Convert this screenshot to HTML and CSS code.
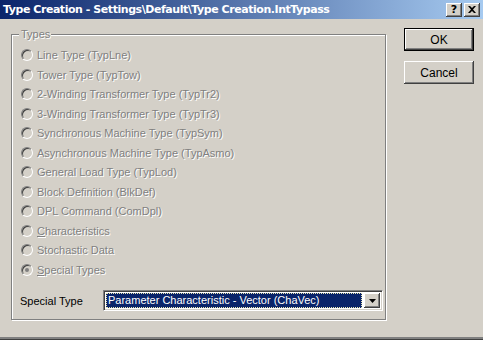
FILE: index.html
```html
<!DOCTYPE html>
<html lang="en">
<head>
    <meta charset="UTF-8">
    <title>Type Creation</title>
    <link rel="stylesheet" href="styles.css">
</head>
<body>
<div class="window">
    <div class="titlebar">
        <span class="title">Type Creation - Settings\Default\Type Creation.IntTypass</span>
        <button class="cap-btn">?</button>
        <button class="cap-btn close">
            <svg width="8" height="7" viewBox="0 0 8 7"><path d="M0 0h2l2 2 2-2h2L5 3.5 8 7H6L4 5 2 7H0l3-3.5z" fill="#000"/></svg>
        </button>
    </div>

    <div class="client">
        <div class="group">
            <span class="legend disabled">Types</span>
            <ul class="radios">
                <li><span class="radio"></span><span class="disabled">Line Type (TypLne)</span></li>
                <li><span class="radio"></span><span class="disabled">Tower Type (TypTow)</span></li>
                <li><span class="radio"></span><span class="disabled">2-Winding Transformer Type (TypTr2)</span></li>
                <li><span class="radio"></span><span class="disabled">3-Winding Transformer Type (TypTr3)</span></li>
                <li><span class="radio"></span><span class="disabled">Synchronous Machine Type (TypSym)</span></li>
                <li><span class="radio"></span><span class="disabled">Asynchronous Machine Type (TypAsmo)</span></li>
                <li><span class="radio"></span><span class="disabled">General Load Type (TypLod)</span></li>
                <li><span class="radio"></span><span class="disabled">Block Definition (BlkDef)</span></li>
                <li><span class="radio"></span><span class="disabled">DPL Command (ComDpl)</span></li>
                <li><span class="radio"></span><span class="disabled"><u>C</u>haracteristics</span></li>
                <li><span class="radio"></span><span class="disabled">Stochastic Data</span></li>
                <li><span class="radio checked"></span><span class="disabled"><u>S</u>pecial Types</span></li>
            </ul>

            <div class="special-row">
                <span class="special-label">Special Type</span>
                <div class="combo">
                    <span class="combo-value">Parameter Characteristic - Vector (ChaVec)</span>
                    <span class="combo-arrow">
                        <svg width="7" height="4" viewBox="0 0 7 4"><path d="M0 0h7L3.5 4z" fill="#000"/></svg>
                    </span>
                </div>
            </div>
        </div>

        <div class="buttons">
            <button class="btn default">OK</button>
            <button class="btn">Cancel</button>
        </div>
    </div>
</div>
</body>
</html>
```

FILE: styles.css
```css
body {
    margin: 0;
    background: #d4d0c8;
    font-family: "Liberation Sans", Arial, sans-serif;
    font-size: 11px;
    overflow: hidden;
}

.window {
    width: 483px;
    height: 340px;
    box-sizing: border-box;
    display: flex;
    flex-direction: column;
    background: #d4d0c8;
    border-bottom: 1px solid #404040;
    box-shadow: inset 0 -2px 0 #808080;
}

/* title bar */
.titlebar {
    height: 19px;
    display: flex;
    align-items: center;
    background: linear-gradient(90deg, #0a246a, #a6caf0);
    padding: 0 3px 0 3px;
}

.title {
    flex: 1;
    color: #fff;
    font-weight: bold;
    font-size: 11px;
    font-family: "DejaVu Sans", sans-serif;
    letter-spacing: -0.45px;
}

.cap-btn {
    width: 16px;
    height: 14px;
    padding: 0;
    margin-left: 2px;
    border: none;
    background: #d4d0c8;
    box-shadow: inset -1px -1px 0 #404040, inset 1px 1px 0 #fff, inset -2px -2px 0 #808080;
    font-family: "DejaVu Sans", sans-serif;
    font-weight: bold;
    font-size: 11px;
    line-height: 14px;
    display: flex;
    align-items: center;
    justify-content: center;
}

/* client area */
.client {
    flex: 1;
    display: flex;
    align-items: flex-start;
}

.group {
    position: relative;
    margin: 15px 0 0 11px;
    width: 373px;
    height: 284px;
    border: 1px solid #808080;
    box-shadow: 1px 1px 0 #fff, inset 1px 1px 0 #fff;
}

.legend {
    position: absolute;
    top: -7px;
    left: 7px;
    padding: 0 1px 0 2px;
    background: #d4d0c8;
    line-height: 13px;
}

.disabled {
    color: #808080;
    text-shadow: 1px 1px 0 #fff;
}

.radios {
    list-style: none;
    margin: 10.25px 0 0 0;
    padding: 0 0 0 9px;
}

.radios li {
    height: 19.5px;
    display: flex;
    align-items: center;
}

.radio {
    width: 12px;
    height: 12px;
    box-sizing: border-box;
    border-radius: 50%;
    border: 1px solid;
    border-color: #808080 #fff #fff #808080;
    box-shadow: inset 1px 1px 0 #404040, inset -1px -1px 0 #d4d0c8;
    background: #d4d0c8;
    margin-right: 4px;
    position: relative;
}

.radio.checked::after {
    content: "";
    position: absolute;
    left: 3px;
    top: 3px;
    width: 4px;
    height: 4px;
    border-radius: 50%;
    background: #808080;
}

.special-row {
    display: flex;
    align-items: center;
    margin-top: 10.75px;
    padding-left: 8px;
}

.special-label {
    width: 83px;
    color: #000;
    font-size: 11px;
}

.combo {
    width: 280px;
    height: 21px;
    box-sizing: border-box;
    display: flex;
    align-items: center;
    padding: 2px;
    background: #fff;
    border: 1px solid;
    border-color: #808080 #fff #fff #808080;
    box-shadow: inset 1px 1px 0 #404040, inset -1px -1px 0 #d4d0c8;
}

.combo-value {
    flex: 1;
    height: 15px;
    line-height: 14px;
    margin-right: 2px;
    box-sizing: border-box;
    padding-left: 2px;
    background: #0a246a;
    color: #fff;
    font-size: 11px;
    outline: 1px dotted #e8e4b0;
    outline-offset: -1px;
}

.combo-arrow {
    width: 16px;
    height: 15px;
    box-sizing: border-box;
    background: #d4d0c8;
    box-shadow: inset -1px -1px 0 #404040, inset 1px 1px 0 #fff, inset -2px -2px 0 #808080;
    display: flex;
    align-items: center;
    justify-content: center;
}

/* buttons */
.buttons {
    display: flex;
    flex-direction: column;
    gap: 10px;
    margin: 9px 0 0 18px;
}

.btn {
    width: 70px;
    height: 23px;
    padding: 0;
    border: none;
    background: #d4d0c8;
    box-shadow: inset -1px -1px 0 #404040, inset 1px 1px 0 #fff, inset -2px -2px 0 #808080;
    font-family: "Liberation Sans", Arial, sans-serif;
    font-size: 12px;
    color: #000;
}

.btn.default {
    box-shadow: inset 0 0 0 1px #000, inset -2px -2px 0 #404040, inset 2px 2px 0 #fff, inset -3px -3px 0 #808080;
}
```
